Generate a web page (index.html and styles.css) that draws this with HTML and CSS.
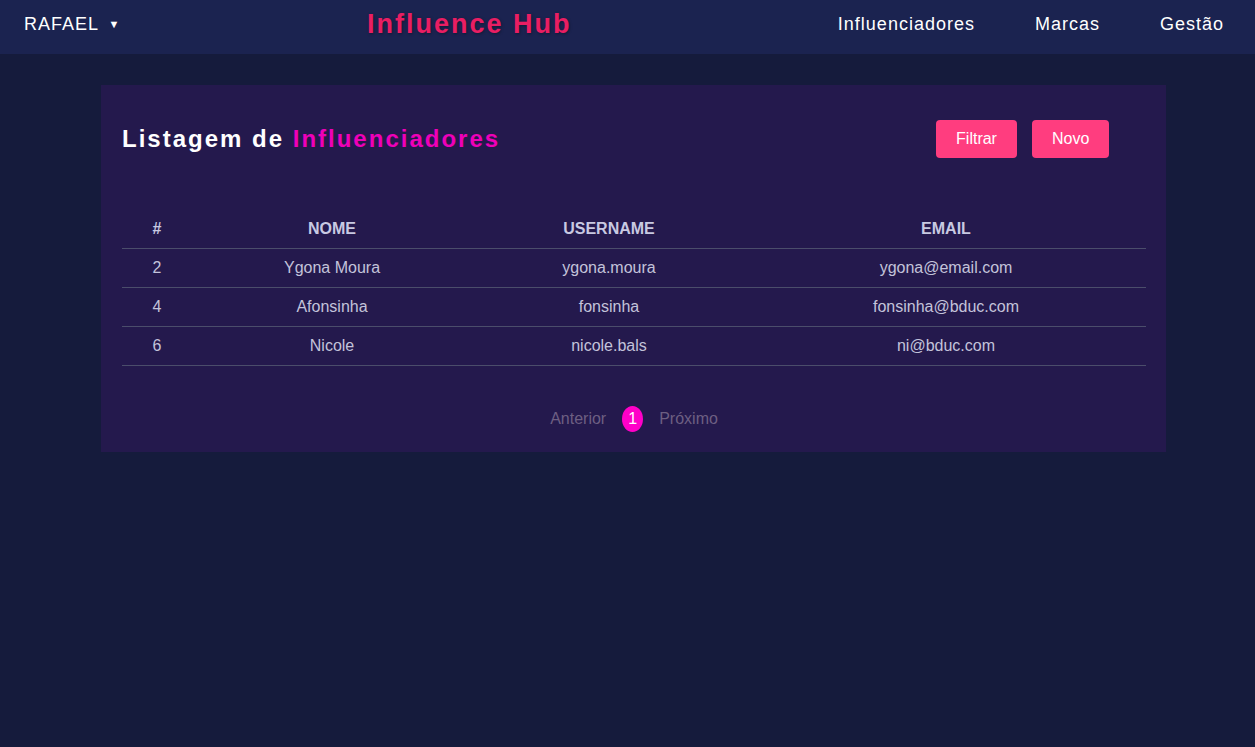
FILE: index.html
```html
<!DOCTYPE html>
<html lang="pt">
<head>
<meta charset="utf-8">
<title>Influence Hub</title>
<link rel="stylesheet" href="styles.css">
</head>
<body>
<header class="navbar">
  <div class="user">RAFAEL <span class="caret">▼</span></div>
  <div class="brand">Influence Hub</div>
  <nav class="links">
    <a href="#">Influenciadores</a>
    <a href="#">Marcas</a>
    <a href="#">Gestão</a>
  </nav>
</header>
<main class="content">
  <section class="card">
    <div class="card-head">
      <h1 class="title">Listagem de <span class="accent">Influenciadores</span></h1>
      <div class="actions">
        <button class="btn btn-filter">Filtrar</button>
        <button class="btn btn-new">Novo</button>
      </div>
    </div>
    <table class="list">
      <thead>
        <tr><th class="c-id">#</th><th class="c-name">NOME</th><th class="c-user">USERNAME</th><th class="c-mail">EMAIL</th></tr>
      </thead>
      <tbody>
        <tr><td>2</td><td>Ygona Moura</td><td>ygona.moura</td><td>ygona@email.com</td></tr>
        <tr><td>4</td><td>Afonsinha</td><td>fonsinha</td><td>fonsinha@bduc.com</td></tr>
        <tr><td>6</td><td>Nicole</td><td>nicole.bals</td><td>ni@bduc.com</td></tr>
      </tbody>
    </table>
    <div class="pager">
      <span class="pg-link">Anterior</span>
      <span class="pg-current">1</span>
      <span class="pg-link">Próximo</span>
    </div>
  </section>
</main>
</body>
</html>
```
FILE: styles.css
```css
* { box-sizing: border-box; }
html, body { margin: 0; padding: 0; }
body {
  background: #151b3c;
  font-family: "Liberation Sans", Arial, sans-serif;
  color: #fff;
  min-height: 747px;
}
.navbar {
  height: 54px;
  background: #1b2350;
  display: flex;
  align-items: center;
  padding: 0 31px 5px 24px;
}
.user {
  font-size: 18px;
  letter-spacing: 1px;
  color: #fff;
  width: 343px;
}
.caret { font-size: 11px; margin-left: 4px; vertical-align: 2px; }
.brand {
  font-size: 27px;
  font-weight: bold;
  letter-spacing: 2px;
  color: #e91e63;
  text-shadow: 1px 1px 3px rgba(0,0,0,0.35);
}
.links {
  margin-left: auto;
  display: flex;
  gap: 60px;
}
.links a {
  color: #fff;
  text-decoration: none;
  font-size: 18px;
  letter-spacing: 1px;
}
.content {
  padding: 31px 89px 0 101px;
}
.card {
  background: #24194d;
  padding: 21px 20px 20px 21px;
}
.card-head {
  display: flex;
  align-items: center;
  justify-content: space-between;
  padding: 14px 37px 0 0;
  height: 52px;
}
.title {
  margin: 0;
  font-size: 24px;
  font-weight: bold;
  letter-spacing: 2px;
  color: #fff;
}
.accent { color: #ee00b8; }
.actions { display: flex; gap: 15px; }
.btn {
  border: none;
  border-radius: 4px;
  background: #ff3d7f;
  color: #fff;
  font-family: "Liberation Sans", Arial, sans-serif;
  font-size: 16px;
  height: 38px;
  padding: 0 20px;
}
.btn-filter { width: 81px; }
.btn-new { width: 77px; }
.list {
  width: 100%;
  border-collapse: collapse;
  margin-top: 50px;
  font-size: 16px;
  table-layout: fixed;
}
.list th, .list td {
  text-align: center;
  border-bottom: 1px solid #4b4d6b;
  height: 39px;
  padding: 0;
}
.list th {
  color: #c8c9e2;
  font-weight: bold;
  height: 40px;
  padding-top: 2px;
}
.list td { color: #c3c3da; }
.c-id { width: 70px; }
.c-name { width: 280px; }
.c-user { width: 274px; }
.pager {
  display: flex;
  justify-content: center;
  align-items: center;
  gap: 16px;
  margin-top: 40px;
  font-size: 16px;
}
.pg-link { color: #6d5f82; }
.pg-current {
  background: #ff00c8;
  color: #fff;
  width: 21px;
  height: 26px;
  border-radius: 50%;
  display: flex;
  align-items: center;
  justify-content: center;
}
```
